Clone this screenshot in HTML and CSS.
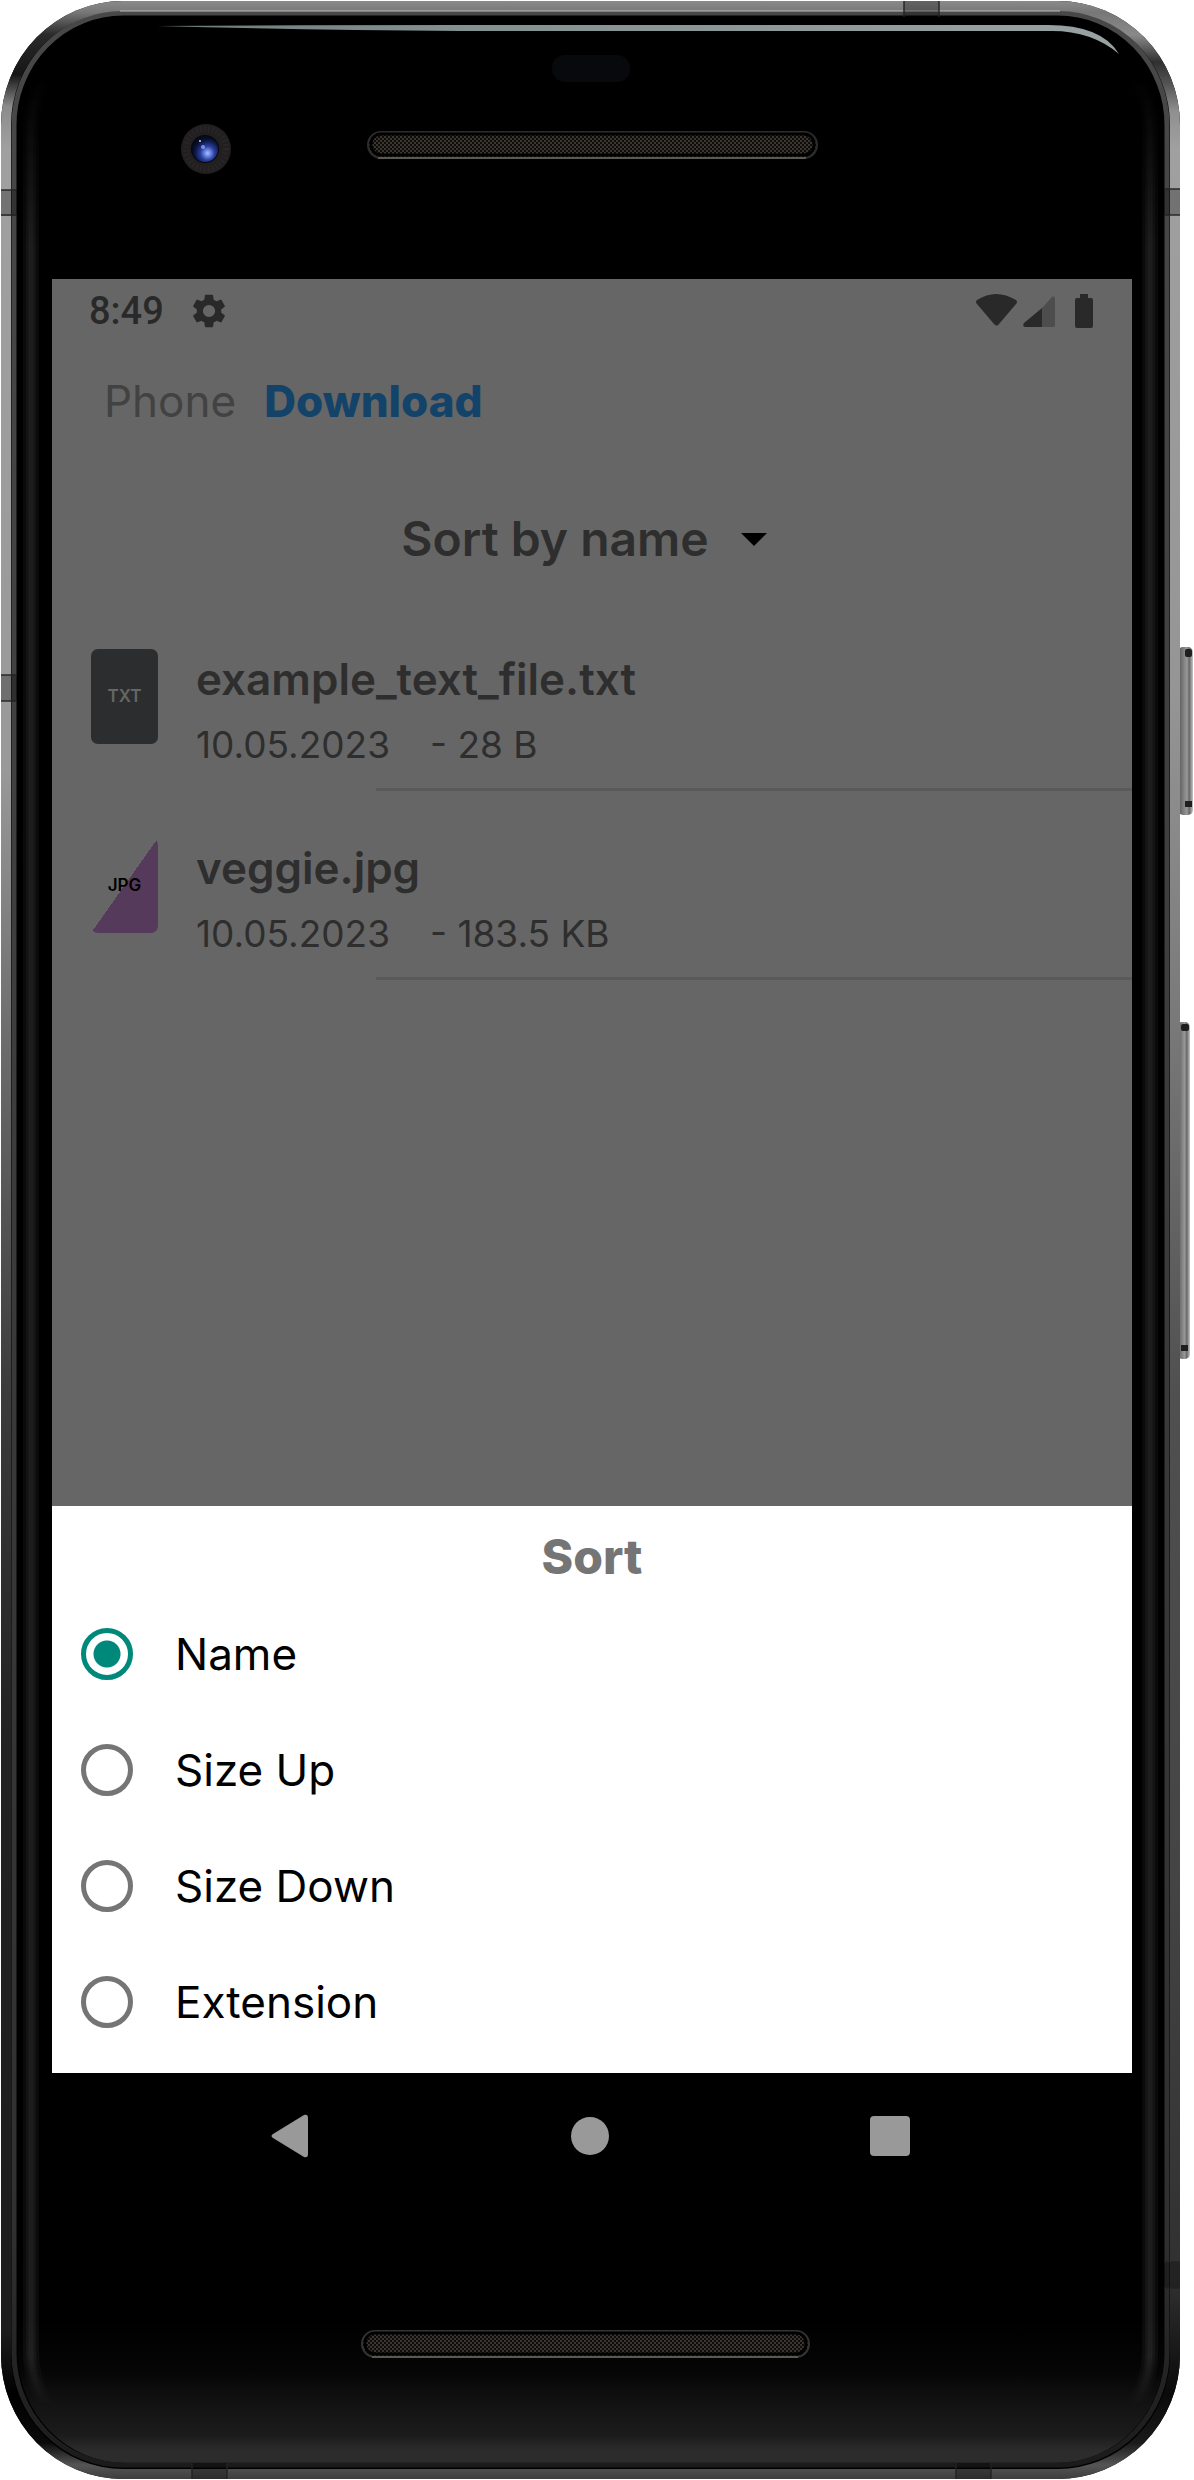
FILE: index.html
```html
<!DOCTYPE html>
<html lang="en">
<head>
<meta charset="utf-8">
<meta name="viewport" content="width=device-width, initial-scale=1">
<title>Download – Sort</title>
<link rel="stylesheet" href="styles.css">
</head>
<body>
<div class="device">
  <svg class="hardware" viewBox="0 0 1194 2480" preserveAspectRatio="none" aria-hidden="true">
    <defs>
      <linearGradient id="rimLeft" gradientUnits="userSpaceOnUse" x1="0" y1="0" x2="0" y2="2480">
        <stop offset="0" stop-color="#8c8c8c"/><stop offset=".005" stop-color="#777"/>
        <stop offset=".014" stop-color="#2a2a2a"/><stop offset=".03" stop-color="#151515"/>
        <stop offset=".043" stop-color="#8c8c8c"/><stop offset=".06" stop-color="#a0a0a0"/>
        <stop offset=".31" stop-color="#999"/><stop offset=".42" stop-color="#6c6c6c"/>
        <stop offset=".56" stop-color="#3c3c3c"/><stop offset=".7" stop-color="#222"/>
        <stop offset=".94" stop-color="#1c1c1c"/><stop offset=".965" stop-color="#000"/>
        <stop offset=".985" stop-color="#0a0a0a"/><stop offset=".994" stop-color="#555"/>
        <stop offset="1" stop-color="#3c3c3c"/>
      </linearGradient>
      <linearGradient id="rimRight" gradientUnits="userSpaceOnUse" x1="0" y1="0" x2="0" y2="2480">
        <stop offset="0" stop-color="#8c8c8c"/><stop offset=".005" stop-color="#777"/>
        <stop offset=".014" stop-color="#8a8a8a"/>
        <stop offset=".025" stop-color="#303030"/><stop offset=".034" stop-color="#555"/>
        <stop offset=".045" stop-color="#909090"/><stop offset=".06" stop-color="#a0a0a0"/>
        <stop offset=".28" stop-color="#959595"/><stop offset=".42" stop-color="#777"/>
        <stop offset=".56" stop-color="#505050"/><stop offset=".76" stop-color="#444"/>
        <stop offset=".92" stop-color="#303030"/><stop offset=".965" stop-color="#0a0a0a"/>
        <stop offset=".985" stop-color="#1a1a1a"/><stop offset=".994" stop-color="#555"/>
        <stop offset="1" stop-color="#3c3c3c"/>
      </linearGradient>
      <linearGradient id="bezel" gradientUnits="userSpaceOnUse" x1="0" y1="0" x2="0" y2="2480">
        <stop offset="0" stop-color="#484848"/><stop offset=".3" stop-color="#404040"/>
        <stop offset=".9" stop-color="#303030"/><stop offset="1" stop-color="#1a1a1a"/>
      </linearGradient>
      <linearGradient id="sheen" gradientUnits="userSpaceOnUse" x1="0" y1="0" x2="0" y2="2480">
        <stop offset=".03" stop-color="#fff" stop-opacity="0"/><stop offset=".1" stop-color="#fff" stop-opacity=".04"/>
        <stop offset=".95" stop-color="#fff" stop-opacity=".04"/><stop offset=".97" stop-color="#fff" stop-opacity="0"/>
      </linearGradient>
      <linearGradient id="chin" x1="0" y1="0" x2="0" y2="1">
        <stop offset="0" stop-color="#000"/><stop offset=".35" stop-color="#050505"/>
        <stop offset=".6" stop-color="#131313"/><stop offset=".8" stop-color="#1b1b1b"/>
        <stop offset=".92" stop-color="#2c2c2c"/><stop offset="1" stop-color="#2c2c2c"/>
      </linearGradient>
      <linearGradient id="glare">
        <stop offset="0" stop-color="#6f7c7a"/><stop offset=".3" stop-color="#829090"/>
        <stop offset="1" stop-color="#98a2a2"/>
      </linearGradient>
      <linearGradient id="key">
        <stop offset="0" stop-color="#555"/><stop offset=".3" stop-color="#777"/>
        <stop offset=".6" stop-color="#999"/><stop offset=".75" stop-color="#666"/><stop offset="1" stop-color="#c4c8c6"/>
      </linearGradient>
      <radialGradient id="lens" cx=".6" cy=".66" r=".6">
        <stop offset="0" stop-color="#a9c0ff"/><stop offset=".2" stop-color="#6d87e0"/>
        <stop offset=".45" stop-color="#2b3f9d"/><stop offset=".8" stop-color="#0d1743"/>
        <stop offset="1" stop-color="#070b1f"/>
      </radialGradient>
      <pattern id="mesh" width="4" height="4" patternUnits="userSpaceOnUse">
        <rect width="4" height="4" fill="#0d0c0b"/>
        <path d="M0 0h2v2H0zM2 2h2v2H2z" fill="#3b362f"/>
      </pattern>
      <clipPath id="glass"><rect x="18" y="17" width="1146" height="2446" rx="108" ry="110"/></clipPath>
    </defs>

    <g fill="url(#key)">
      <rect x="1178" y="647" width="15" height="168" rx="5"/>
      <rect x="1177" y="1022" width="13" height="337" rx="5"/>
    </g>
    <g fill="#1e1e1e">
      <rect x="1185" y="649" width="7" height="8" rx="2"/><rect x="1185" y="801" width="7" height="6"/>
      <rect x="1181" y="1024" width="8" height="7" rx="2"/><rect x="1181" y="1345" width="7" height="6"/>
    </g>

    <rect x="1" y="1" width="1179" height="2478" rx="122" ry="124"/>
    <rect x="18" y="2320" width="1146" height="143" fill="url(#chin)" clip-path="url(#glass)"/>
    <g fill="none">
      <g stroke="url(#sheen)">
        <rect x="31" y="30" width="1119" height="2420" rx="96" ry="98" stroke-width="16"/>
        <rect x="31" y="30" width="1119" height="2420" rx="96" ry="98" stroke-width="10"/>
        <rect x="31" y="30" width="1119" height="2420" rx="96" ry="98" stroke-width="5"/>
      </g>
      <rect x="14" y="13" width="1153" height="2452" rx="109" ry="112" stroke="url(#bezel)" stroke-width="5"/>
      <path d="M590 6H123A117 119 0 0 0 6 125V2355A117 119 0 0 0 123 2474H590" stroke="url(#rimLeft)" stroke-width="10"/>
      <path d="M590 6H1058A117 119 0 0 1 1175 125V2355A117 119 0 0 1 1058 2474H590" stroke="url(#rimRight)" stroke-width="10"/>
      <path d="M120 11H1060" stroke="#bbb" stroke-width="1"/>
    </g>

    <g fill="#000" fill-opacity=".28">
      <rect x="1" y="190" width="16" height="26"/><rect x="1" y="675" width="16" height="26"/>
      <rect x="1164" y="189" width="16" height="26"/><rect x="1164" y="2262" width="16" height="26"/>
      <rect x="904" y="1" width="35" height="16"/>
      <rect x="192" y="2463" width="35" height="16"/><rect x="956" y="2463" width="35" height="16"/>
    </g>
    <path d="M1 190h16M1 215h16M1 675h16M1 701h16M1164 189h16M1164 215h16M1164 2262h16M1164 2288h16M904 1v16M939 1v16M192 2463v16M227 2463v16M956 2463v16M991 2463v16" stroke="#222" stroke-opacity=".7" stroke-width="2"/>

    <path d="M157 26Q300 25 460 25H1048Q1102 25 1119 54Q1092 31 1052 31H460Q300 30 157 26Z" fill="url(#glare)"/>
    <rect x="552" y="55" width="78" height="27" rx="13" fill="#08090d"/>

    <circle cx="206" cy="149" r="25" fill="#221f20"/>
    <circle cx="206" cy="149" r="20" fill="none" stroke="#2d292a" stroke-width="6" stroke-dasharray="1 3"/>
    <circle cx="205" cy="149" r="14" fill="#05070f"/>
    <circle cx="205" cy="149" r="13" fill="url(#lens)"/>
    <circle cx="203" cy="147" r="2" fill="#7590ef"/><circle cx="200" cy="141" r="1" fill="#cdd8ff"/>

    <g fill="url(#mesh)">
      <rect x="368" y="132" width="449" height="26" rx="13" stroke="#2c2c2c" stroke-width="2"/>
      <rect x="362" y="2331" width="447" height="26" rx="13" stroke="#333" stroke-width="2"/>
    </g>
    <g fill="none" stroke="#000" stroke-width="3">
      <rect x="371" y="134" width="443" height="21" rx="10"/><rect x="365" y="2333" width="441" height="21" rx="10"/>
    </g>
    <path d="M378 158H806M372 2357H798" stroke="#5c5955" stroke-width="2"/>
  </svg>

  <main class="screen">
    <section class="files">
      <header class="status">
        <span class="clock">8:49</span>
        <svg class="gear" viewBox="2 2 20 20" aria-hidden="true"><path d="M19.14 12.94c.04-.3.06-.61.06-.94 0-.32-.02-.64-.07-.94l2.03-1.58a.49.49 0 0 0 .12-.61l-1.92-3.32a.488.488 0 0 0-.59-.22l-2.39.96c-.5-.38-1.03-.7-1.62-.94l-.36-2.54a.484.484 0 0 0-.48-.41h-3.84c-.24 0-.43.17-.47.41l-.36 2.54c-.59.24-1.13.57-1.62.94l-2.39-.96c-.22-.08-.47 0-.59.22L2.74 8.87c-.12.21-.08.47.12.61l2.03 1.58c-.05.3-.09.63-.09.94s.02.64.07.94l-2.03 1.58a.49.49 0 0 0-.12.61l1.92 3.32c.12.22.37.29.59.22l2.39-.96c.5.38 1.03.7 1.62.94l.36 2.54c.05.24.24.41.48.41h3.84c.24 0 .44-.17.47-.41l.36-2.54c.59-.24 1.13-.56 1.62-.94l2.39.96c.22.08.47 0 .59-.22l1.92-3.32c.12-.22.07-.47-.12-.61l-2.01-1.58zM12 15.6A3.6 3.6 0 1 1 12 8.400a3.600 3.600 0 0 1 0 7.200z"/></svg>
        <svg class="signals" viewBox="0 0 118 34" aria-hidden="true">
          <path d="M1 10Q-1 8 1 6Q20-6 40 6Q42 8 40 10L23 30Q21 33 18 30Z"/>
          <path d="M66 14V33H49Q46 32 48 29Z"/>
          <path d="M66 14L76 3Q78 1 79 4V31Q79 33 77 33H66Z" fill-opacity=".4"/>
          <path d="M104 0H112V4H115Q117 4 117 6V32Q117 34 115 34H101Q99 34 99 32V6Q99 4 101 4H104Z"/>
        </svg>
      </header>
      <nav class="crumbs" aria-label="Folder path">
        <a class="crumb" href="#phone">Phone</a>
        <a class="crumb crumb-current" href="#download" aria-current="page">Download</a>
      </nav>
      <button class="sort-button" type="button">Sort by name<span class="caret"></span></button>
      <ul class="list">
        <li class="file">
          <span class="badge badge-txt">TXT</span>
          <div class="info">
            <h2 class="name">example_text_file.txt</h2>
            <p class="meta"><span>10.05.2023</span><span>- 28 B</span></p>
          </div>
        </li>
        <li class="file">
          <span class="badge badge-jpg">JPG</span>
          <div class="info">
            <h2 class="name">veggie.jpg</h2>
            <p class="meta"><span>10.05.2023</span><span>- 183.5 KB</span></p>
          </div>
        </li>
      </ul>
    </section>
    <form class="sheet">
      <h1 class="sheet-title" id="sort-title">Sort</h1>
      <div role="radiogroup" aria-labelledby="sort-title">
        <label class="option"><input class="radio" type="radio" name="sort" checked>Name</label>
        <label class="option"><input class="radio" type="radio" name="sort">Size Up</label>
        <label class="option"><input class="radio" type="radio" name="sort">Size Down</label>
        <label class="option"><input class="radio" type="radio" name="sort">Extension</label>
      </div>
    </form>
  </main>

  <nav class="system" aria-label="System">
    <button class="key" type="button" aria-label="Back"><svg viewBox="0 0 48 48"><path d="M7 22L38 3Q42 2 42 6V42Q42 46 38 45L7 26Q4 24 7 22Z"/></svg></button>
    <button class="key" type="button" aria-label="Home"><svg viewBox="0 0 48 48"><circle cx="24" cy="24" r="19"/></svg></button>
    <button class="key" type="button" aria-label="Recent apps"><svg viewBox="0 0 48 48"><rect x="4" y="4" width="40" height="40" rx="4"/></svg></button>
  </nav>
</div>
</body>
</html>
```
FILE: styles.css
```css
* { box-sizing: border-box; }

body {
  margin: 0;
  background: #fff;
  font-family: Inter, "Liberation Sans", sans-serif;
}

h1, h2, p, ul { margin: 0; padding: 0; }

.device {
  position: relative;
  display: flex;
  flex-direction: column;
  min-height: 100vh;
  padding: 279px 62px 281px 52px;
}

.hardware {
  position: absolute;
  inset: 0;
  width: 100%;
  height: 100%;
}

.screen {
  position: relative;
  flex: 1;
  display: flex;
  flex-direction: column;
}

.files {
  flex: 1;
  display: flex;
  flex-direction: column;
  background: #666;
  color: #2e2e2e;
}

.status {
  display: flex;
  align-items: center;
  height: 64px;
  padding: 0 38px 0 37px;
  fill: #292929;
}

.clock {
  font: 500 38px/48px Roboto, sans-serif;
  color: #292929;
}

.gear { width: 34px; height: 34px; margin-left: 28px; }
.signals { width: 118px; height: 34px; margin-left: auto; }

.crumbs {
  display: flex;
  gap: 28px;
  padding: 30px 52px 0;
  font-size: 44px;
  line-height: 56px;
}

.crumb { color: #424242; text-decoration: none; }
.crumb-current { color: #14436a; font-weight: 800; }

.sort-button {
  display: flex;
  align-items: center;
  align-self: center;
  gap: 32px;
  margin: 82px 0 35px;
  padding: 0 16px 0 0;
  border: 0;
  background: none;
  color: inherit;
  font: 600 48px/56px Inter, sans-serif;
}

.caret {
  border: 13px solid transparent;
  border-top-color: #000;
  border-bottom: 0;
}

.list { list-style: none; }

.file {
  display: flex;
  align-items: flex-start;
  gap: 38px;
  height: 189px;
  padding: 47px 0 0 39px;
  background: linear-gradient(#5a5a5a, #5a5a5a) right bottom / 70% 3px no-repeat;
}

.badge {
  width: 67px;
  border-radius: 7px;
  font-size: 17px;
  font-weight: 600;
  line-height: 95px;
  text-align: center;
}

.badge-txt { background: #2c2d2f; color: #666; }
.badge-jpg { background: linear-gradient(to bottom right, transparent 50%, #563a5c 50%); color: #000; }

.info { padding-top: 6px; }
.name { font-size: 44px; font-weight: 600; line-height: 48px; }

.meta {
  display: flex;
  gap: 40px;
  margin-top: 18px;
  font-size: 37px;
  line-height: 48px;
}

.sheet { padding: 23px 0 13px; background: #fff; }

.sheet-title {
  margin-bottom: 11px;
  color: #757575;
  font-size: 48px;
  font-weight: 800;
  line-height: 56px;
  text-align: center;
}

.option {
  display: flex;
  align-items: center;
  gap: 42px;
  height: 116px;
  padding-left: 29px;
  color: #000;
  font-size: 44px;
}

.radio {
  appearance: none;
  width: 52px;
  height: 52px;
  margin: 0;
  border: 5px solid #757575;
  border-radius: 50%;
}

.radio:checked {
  border-color: #00897b;
  background: radial-gradient(circle, #00897b 13px, transparent 14px);
}

.system {
  position: relative;
  display: flex;
  align-items: center;
  justify-content: space-between;
  height: 126px;
  padding: 0 218px 0 214px;
}

.key { width: 48px; height: 48px; padding: 0; border: 0; background: none; fill: #999; }
.key svg { display: block; width: 100%; height: 100%; }
```
